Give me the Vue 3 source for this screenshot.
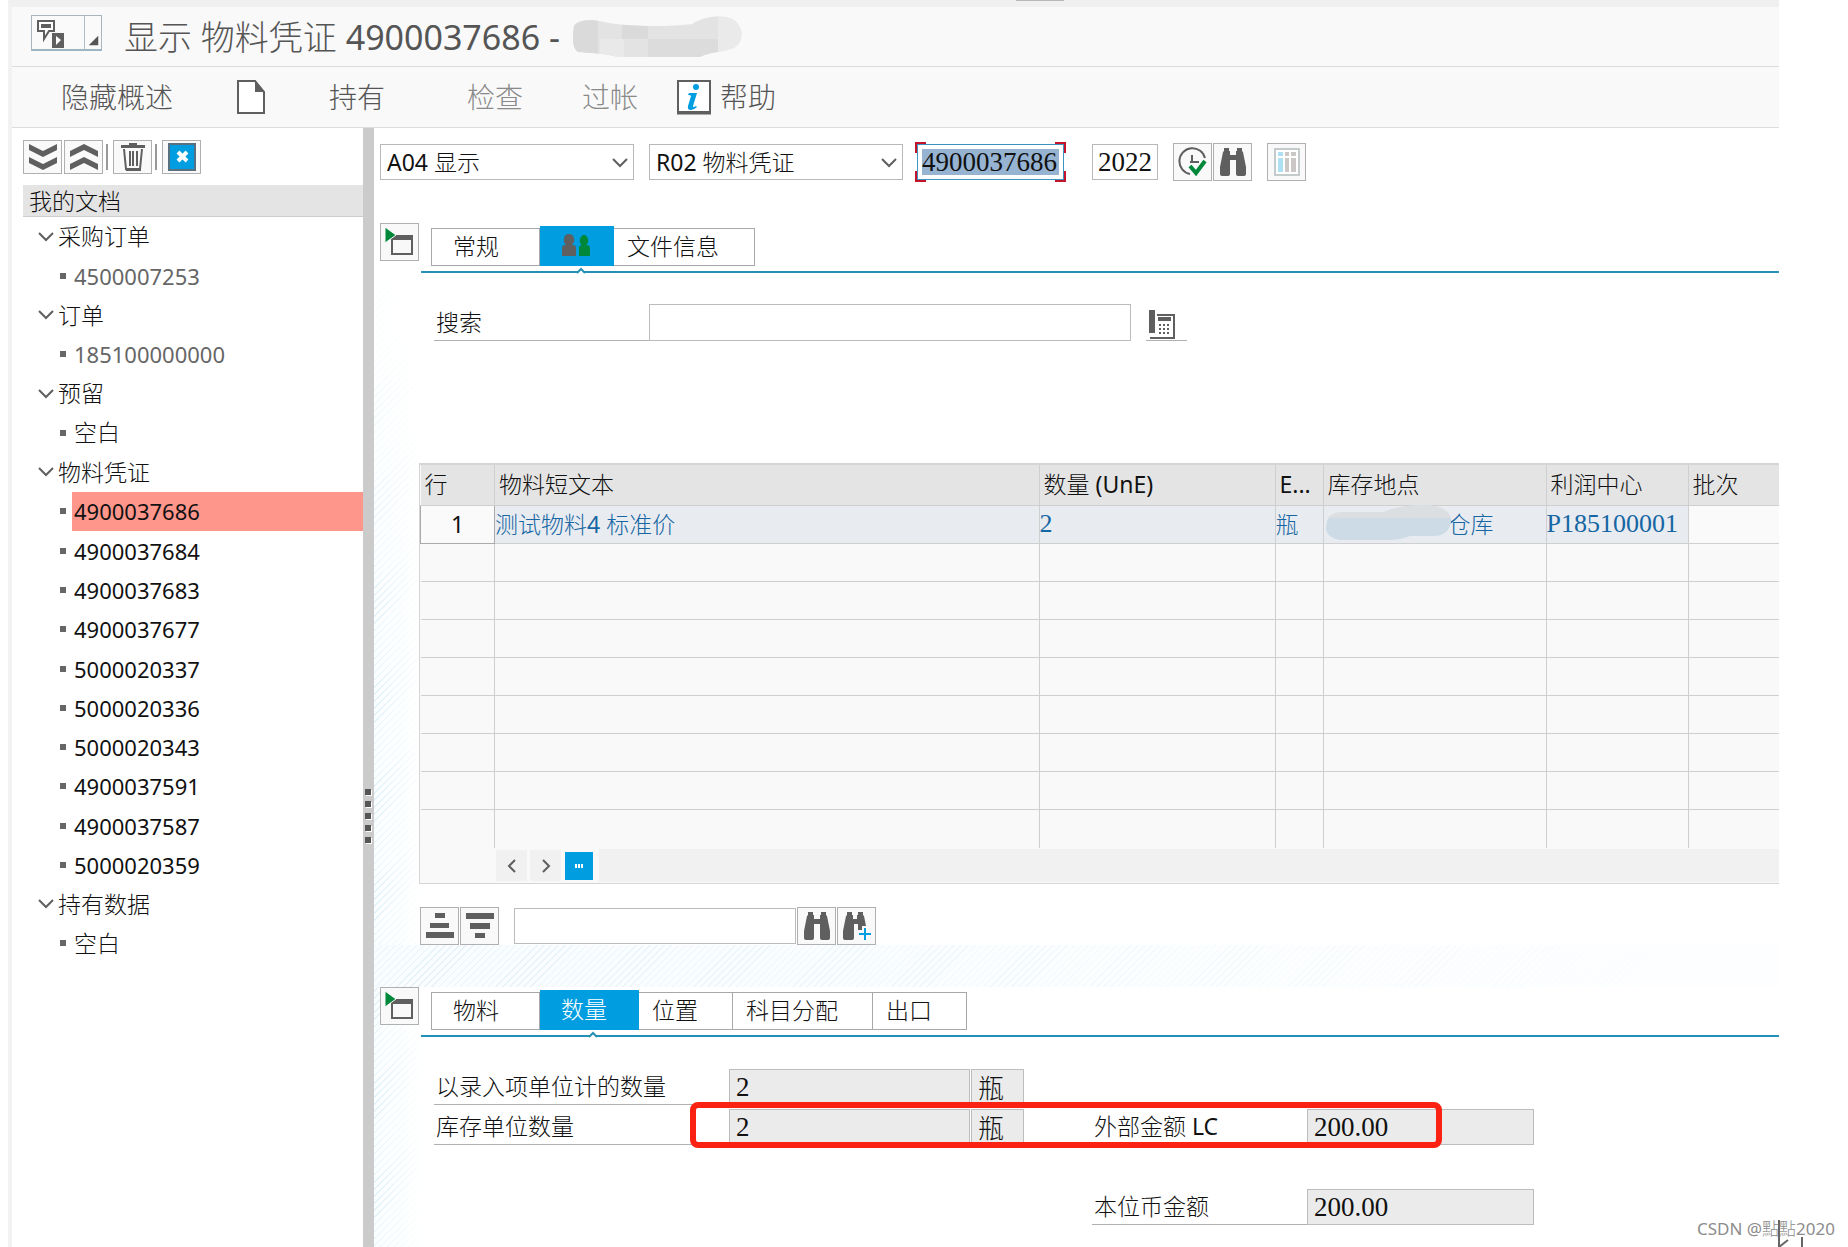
<script setup>
import { ref } from 'vue'

const action = ref('A04')
const refDoc = ref('R02')
const docNumber = ref('4900037686')
const docYear = ref('2022')
const keyword = ref('')
const itemSearch = ref('')

const tree = [
  { label: '采购订单', group: true },
  { label: '4500007253', muted: true, num: true },
  { label: '订单', group: true },
  { label: '185100000000', muted: true, num: true },
  { label: '预留', group: true },
  { label: '空白' },
  { label: '物料凭证', group: true },
  { label: '4900037686', active: true, num: true },
  { label: '4900037684', num: true },
  { label: '4900037683', num: true },
  { label: '4900037677', num: true },
  { label: '5000020337', num: true },
  { label: '5000020336', num: true },
  { label: '5000020343', num: true },
  { label: '4900037591', num: true },
  { label: '4900037587', num: true },
  { label: '5000020359', num: true },
  { label: '持有数据', group: true },
  { label: '空白' },
]

const columns = [
  { title: '行', cls: 'c-row' },
  { title: '物料短文本', cls: 'c-text' },
  { title: '数量 (UnE)', cls: 'c-qty' },
  { title: 'E...', cls: 'c-unit' },
  { title: '库存地点', cls: 'c-loc' },
  { title: '利润中心', cls: 'c-profit' },
  { title: '批次', cls: 'c-batch' },
]
</script>

<template>
  <div class="page">
    <div class="window">
      <i class="handle"></i>
      <header class="titlebar">
        <button class="menu-btn" aria-label="菜单">
          <svg width="52" height="34" viewBox="0 0 52 34">
            <path d="M6 5h16v10h-5l-5 8v-8H6z" fill="#fff" stroke="#5f5f5f" stroke-width="2" />
            <path d="M9 8h10v4H9z" fill="#5f5f5f" />
            <path d="M20 17h12v15H20z" fill="#5f5f5f" />
            <path d="M24 20l5 4-5 5z" fill="#fff" />
          </svg>
          <svg class="menu-corner" width="18" height="34" viewBox="0 0 18 34">
            <path d="M14 20v10H4z" fill="#555" />
          </svg>
        </button>
        <h1>显示 物料凭证 4900037686 -</h1>
        <svg class="title-mask" width="172" height="42" viewBox="0 0 172 42">
          <defs>
            <clipPath id="titleBlob">
              <path d="M4 10C7 4 22 3 34 6C55 11 100 11 122 8C135 0 152-2 164 4C176 14 172 27 164 32C152 36 140 36 130 41H48C34 37 20 37 8 36C1 31 3 18 4 10z" />
            </clipPath>
          </defs>
          <g clip-path="url(#titleBlob)">
            <path d="M0 0h172v42H0z" fill="#e3e3e3" />
            <path d="M0 0h28v42H0zM52 0h26v23H52z" fill="#dadada" />
            <path d="M78 23h70v19H78z" fill="#dcdcdc" />
            <path d="M148 0h24v42h-24z" fill="#eaeaea" />
            <path d="M30 23h24v19H30z" fill="#e9e9e9" />
          </g>
        </svg>
      </header>

      <nav class="toolbar">
        <button class="tool t-hide">隐藏概述</button>
        <button class="tool t-new" aria-label="新建">
          <svg width="30" height="36" viewBox="0 0 30 36">
            <path d="M2 2h17l9 11v21H2z" fill="#fff" stroke="#5f5f5f" stroke-width="2" />
            <path d="M19 1l10 12H19z" fill="#5f5f5f" />
            <path d="M1 34h28" stroke="#5f5f5f" stroke-width="2" />
          </svg>
        </button>
        <button class="tool t-hold">持有</button>
        <button class="tool t-check dim">检查</button>
        <button class="tool t-post dim">过帐</button>
        <button class="tool t-help">
          <svg width="34" height="36" viewBox="0 0 34 36">
            <path d="M1 2h32v31H1z" fill="#fff" stroke="#5f5f5f" stroke-width="2" />
            <path d="M0 34h34" stroke="#5f5f5f" stroke-width="3" />
            <circle cx="19" cy="8" r="3" fill="#009de0" />
            <path d="M12 14h8l-4 13q0 2 3 0l1 1q-3 3-6 3-4 0-3-4l3-10q0-1-3-1z" fill="#009de0" />
          </svg>
          帮助
        </button>
      </nav>

      <div class="body">
        <aside class="side">
          <div class="side-tools">
            <button class="icon-btn" aria-label="全部展开">
              <svg width="30" height="28" viewBox="0 0 30 28" fill="#5f5f5f">
                <path d="M1 1l14 7 14-7v6l-14 7L1 7zM1 14l14 7 14-7v6l-14 7L1 20z" />
              </svg>
            </button>
            <button class="icon-btn" aria-label="全部折叠">
              <svg width="30" height="28" viewBox="0 0 30 28" fill="#5f5f5f">
                <path d="M1 14V8l14-7 14 7v6L15 7zM1 27v-6l14-7 14 7v6l-14-7z" />
              </svg>
            </button>
            <i class="sep"></i>
            <button class="icon-btn" aria-label="删除">
              <svg width="26" height="30" viewBox="0 0 26 30">
                <path d="M9 3V1h8v2h8v3H1V3z" fill="#5f5f5f" />
                <path d="M4 7l2 20h14l2-20M10 9v15M13 9v15M17 9v15" fill="none" stroke="#5f5f5f" stroke-width="2" />
                <path d="M5 26h16v3H6z" fill="#5f5f5f" />
              </svg>
            </button>
            <i class="sep"></i>
            <button class="icon-btn" aria-label="关闭概述">
              <svg width="28" height="28" viewBox="0 0 28 28">
                <path d="M1 1h26v26H1z" fill="#009de0" stroke="#5a7080" stroke-width="2" />
                <path d="M10 9l9 9M19 9l-9 9" stroke="#fff" stroke-width="4" />
              </svg>
            </button>
          </div>
          <h2>我的文档</h2>
          <ul class="tree">
            <li v-for="(n, i) in tree" :key="i" :class="{ group: n.group, muted: n.muted, active: n.active, num: n.num }">
              <svg v-if="n.group" class="caret" width="16" height="10" viewBox="0 0 16 10">
                <path d="M1 1l7 7 7-7" fill="none" stroke="#5f5f5f" stroke-width="2" />
              </svg>
              <i v-else class="dot"></i>
              <span>{{ n.label }}</span>
            </li>
          </ul>
        </aside>

        <div class="splitter"><i v-for="n in 5" :key="n"></i></div>

        <main class="main">
          <div class="selectors">
            <div class="pick">
              <select v-model="action" aria-label="操作"><option value="A04">A04 显示</option></select>
              <svg width="16" height="10" viewBox="0 0 16 10"><path d="M1 1l7 7 7-7" fill="none" stroke="#5f5f5f" stroke-width="2" /></svg>
            </div>
            <div class="pick">
              <select v-model="refDoc" aria-label="参考凭证"><option value="R02">R02 物料凭证</option></select>
              <svg width="16" height="10" viewBox="0 0 16 10"><path d="M1 1l7 7 7-7" fill="none" stroke="#5f5f5f" stroke-width="2" /></svg>
            </div>
            <div class="focus-field">
              <input v-model="docNumber" aria-label="物料凭证编号" />
              <i class="k tl"></i><i class="k tr"></i><i class="k bl"></i><i class="k br"></i>
            </div>
            <input v-model="docYear" class="year" aria-label="年度" />
            <div class="pair">
              <button class="icon-btn tall" aria-label="执行">
                <svg width="30" height="30" viewBox="0 0 30 30" fill="none">
                  <path d="M12 27A13 13 0 1 1 27 11" stroke="#5f5f5f" stroke-width="2" />
                  <path d="M14 8v8M12 15h9" stroke="#5f5f5f" stroke-width="2" />
                  <path d="M12 19l6 7 9-12" stroke="#00883a" stroke-width="4" />
                </svg>
              </button>
              <button class="icon-btn tall" aria-label="查找凭证">
                <svg width="28" height="30" viewBox="0 0 28 30" fill="#5f5f5f">
                  <path d="M5 1h5v3h1v4h6V4h1V1h5v3l1 1 3 15v7q0 2-2 2h-6q-2 0-2-2V13h-6v14q0 2-2 2H3q-2 0-2-2v-7L4 5l1-1z" />
                </svg>
              </button>
            </div>
            <button class="icon-btn tall" aria-label="布局">
              <svg width="28" height="30" viewBox="0 0 28 30">
                <path d="M2 2h24v26H2z" fill="#fff" stroke="#c4cbcd" stroke-width="2" />
                <path d="M5 5h5v4H5zM5 11h5v14H5z" fill="#ade0f2" />
                <path d="M12 5h4v4h-4zM12 11h4v14h-4zM18 5h5v4h-5zM18 11h5v14h-5z" fill="#cbc7c7" />
              </svg>
            </button>
          </div>

          <div class="tab-row">
            <button class="icon-btn tall" aria-label="折叠抬头">
              <svg width="30" height="32" viewBox="0 0 30 32">
                <path d="M7 12h20v16H7z" fill="#f8f8f8" stroke="#5f5f5f" stroke-width="2" />
                <path d="M9 9h19v5H6z" fill="#5f5f5f" />
                <path d="M0 1l11 8-11 8z" fill="#00883a" stroke="#f8f8f8" stroke-width="1" />
              </svg>
            </button>
            <div class="tabs-box">
              <div class="tabs">
                <button class="tab w-a">常规</button>
                <button class="tab w-b on" aria-label="供应商">
                  <svg width="30" height="22" viewBox="0 0 30 22">
                    <path d="M1 22V14q0-3 3-3h1Q2 8 3 4q1-4 5-4t5 4q1 4-2 7h1q3 0 3 3v8z" fill="#5f5f5f" />
                    <path d="M18 22v-8q0-3 3-3Q18 9 19 5q1-4 4-4t4 4q1 4-2 6 4 0 4 3v8z" fill="#00883a" />
                  </svg>
                  <svg class="notch" width="10" height="7" viewBox="0 0 10 7">
                    <path d="M1 6l4-4 4 4" fill="#fff" stroke="#2590b5" stroke-width="2" />
                  </svg>
                </button>
                <button class="tab w-c near">文件信息</button>
              </div>
            </div>
          </div>

          <div class="search-row">
            <label for="kw">搜索</label>
            <input id="kw" v-model="keyword" />
            <button class="phone" aria-label="联系方式">
              <svg width="28" height="30" viewBox="0 0 28 30">
                <path d="M1 1h6v23H1z" fill="#5f5f5f" />
                <path d="M9 6h17v23H2" fill="none" stroke="#5f5f5f" stroke-width="2" />
                <path d="M10 8h13v4H10z" fill="#5f5f5f" />
                <path d="M11 16h11M11 20h11M11 24h11" stroke="#5f5f5f" stroke-width="2" stroke-dasharray="2 2" />
              </svg>
            </button>
          </div>

          <section class="grid-box">
            <table>
              <colgroup><col v-for="c in columns" :key="c.cls" :class="c.cls" /></colgroup>
              <thead>
                <tr><th v-for="c in columns" :key="c.cls">{{ c.title }}</th></tr>
              </thead>
              <tbody>
                <tr class="filled">
                  <td class="rownum">1</td>
                  <td>测试物料4 标准价</td>
                  <td class="serif">2</td>
                  <td>瓶</td>
                  <td class="loc">
                    <svg width="128" height="36" viewBox="0 0 128 36">
                      <path d="M3 17Q6 8 20 8L60 8Q80 0 104 1 128 4 127 18 124 33 108 32L86 32Q76 36 66 36L16 36Q2 33 2 24z" fill="#cddbe7" />
                      <path d="M4 14Q8 8 20 8L60 8Q80 0 104 1 123 3 127 14z" fill="#dcdfe2" />
                    </svg>
                    <span>仓库</span>
                  </td>
                  <td class="serif">P185100001</td>
                  <td class="blank"></td>
                </tr>
                <tr v-for="r in 8" :key="r"><td v-for="c in columns" :key="c.cls"></td></tr>
              </tbody>
            </table>
            <div class="scroller">
              <button class="arrow" aria-label="向左滚动">
                <svg width="10" height="14" viewBox="0 0 10 14"><path d="M8 1L2 7l6 6" fill="none" stroke="#5f5f5f" stroke-width="2" /></svg>
              </button>
              <button class="arrow" aria-label="向右滚动">
                <svg width="10" height="14" viewBox="0 0 10 14"><path d="M2 1l6 6-6 6" fill="none" stroke="#5f5f5f" stroke-width="2" /></svg>
              </button>
              <button class="thumb" aria-label="滚动块">
                <svg width="8" height="4" viewBox="0 0 8 4"><path d="M0 0h2v4H0zM3 0h2v4H3zM6 0h2v4H6z" fill="#fff" /></svg>
              </button>
              <div class="track"></div>
            </div>
          </section>

          <div class="item-tools">
            <div class="pair">
              <button class="icon-btn tall" aria-label="升序">
                <svg width="30" height="26" viewBox="0 0 30 26" fill="#5f5f5f"><path d="M10 0h10v5H10zM5 10h19v5H5zM1 19h28v6H1z" /></svg>
              </button>
              <button class="icon-btn tall" aria-label="降序">
                <svg width="30" height="26" viewBox="0 0 30 26" fill="#5f5f5f"><path d="M1 0h28v6H1zM5 10h20v6H5zM10 20h10v5H10z" /></svg>
              </button>
            </div>
            <input v-model="itemSearch" aria-label="查找项目" />
            <div class="pair">
              <button class="icon-btn tall" aria-label="查找">
                <svg width="28" height="30" viewBox="0 0 28 30" fill="#5f5f5f">
                  <path d="M5 1h5v3h1v4h6V4h1V1h5v3l1 1 3 15v7q0 2-2 2h-6q-2 0-2-2V13h-6v14q0 2-2 2H3q-2 0-2-2v-7L4 5l1-1z" />
                </svg>
              </button>
              <button class="icon-btn tall" aria-label="查找下一个">
                <svg width="30" height="30" viewBox="0 0 30 30" fill="#5f5f5f">
                  <path d="M5 1h5v3h1v4h4V4h1V1h5v3l1 1 2 10h-4v4h-4v-6h-4v14q0 2-2 2H3q-2 0-2-2v-7L4 5l1-1z" />
                  <path d="M23 17v12M17 23h12" stroke="#009de0" stroke-width="2" />
                </svg>
              </button>
            </div>
          </div>

          <div class="band"></div>

          <div class="tab-row second">
            <button class="icon-btn tall" aria-label="折叠明细">
              <svg width="30" height="32" viewBox="0 0 30 32">
                <path d="M7 12h20v16H7z" fill="#f8f8f8" stroke="#5f5f5f" stroke-width="2" />
                <path d="M9 9h19v5H6z" fill="#5f5f5f" />
                <path d="M0 1l11 8-11 8z" fill="#00883a" stroke="#f8f8f8" stroke-width="1" />
              </svg>
            </button>
            <div class="tabs-box">
              <div class="tabs">
                <button class="tab w-a">物料</button>
                <button class="tab w-d on">
                  数量
                  <svg class="notch" width="10" height="7" viewBox="0 0 10 7">
                    <path d="M1 6l4-4 4 4" fill="#fff" stroke="#2590b5" stroke-width="2" />
                  </svg>
                </button>
                <button class="tab w-e near">位置</button>
                <button class="tab w-f near">科目分配</button>
                <button class="tab w-e near">出口</button>
              </div>
            </div>
          </div>

          <form class="detail" @submit.prevent>
            <div class="line">
              <label for="q1" class="lab">以录入项单位计的数量</label>
              <input id="q1" class="qty" value="2" readonly />
              <input class="unit" value="瓶" readonly aria-label="录入单位" />
            </div>
            <div class="line">
              <label for="q2" class="lab">库存单位数量</label>
              <input id="q2" class="qty" value="2" readonly />
              <input class="unit" value="瓶" readonly aria-label="库存单位" />
              <label for="a1" class="lab money">外部金额 LC</label>
              <input id="a1" class="amount" value="200.00" readonly />
              <div class="mark"></div>
            </div>
            <div class="line last">
              <label for="a2" class="lab money">本位币金额</label>
              <input id="a2" class="amount" value="200.00" readonly />
            </div>
          </form>
        </main>
      </div>
    </div>
    <svg class="cursor" width="28" height="27" viewBox="0 0 28 27">
      <path d="M1 0v27M1 27l9-7M24 17v10" fill="none" stroke="#666" stroke-width="2" />
    </svg>
    <div class="credit">CSDN @點點2020</div>
  </div>
</template>

<style>
body {
  margin: 0;
  background: #fff;
}
</style>

<style scoped>
.page {
  position: relative;
  min-height: 100vh;
  display: flex;
  box-sizing: border-box;
  padding-right: 69px;
  overflow: hidden;
  color: #111;
  font: 400 23px/1 "Noto Sans", "Noto Sans CJK SC Light", "Noto Sans CJK SC", sans-serif;
}
.page *,
.page *::before {
  box-sizing: border-box;
}
button,
input,
select {
  margin: 0;
  padding: 0;
  border: 0;
  border-radius: 0;
  background: none;
  color: inherit;
  font: inherit;
}
svg {
  display: block;
  flex: none;
}
.window {
  flex: 1;
  min-width: 0;
  display: flex;
  flex-direction: column;
  margin-left: 8px;
  border-top: 7px solid #f0f0f0;
  border-left: 4px solid #f2f2f2;
}
.handle {
  position: absolute;
  left: 55%;
  top: 0;
  width: 48px;
  height: 1px;
  background: #b8b8b8;
}
.titlebar {
  display: flex;
  align-items: center;
  height: 60px;
  padding-left: 19px;
  background: #f9f9f9;
  border-bottom: 1px solid #dcdcdc;
}
.menu-btn {
  display: flex;
  width: 71px;
  height: 36px;
  margin-bottom: 8px;
  border: 1px solid #a9b4bb;
  border-bottom: 2px solid #9db4c4;
  background: #fafafa;
}
.menu-corner {
  border-left: 1px solid #b5bcc2;
}
h1 {
  margin: 0 10px 0 22px;
  color: #555;
  font-size: 34px;
  line-height: 50px;
  font-weight: 400;
}
.toolbar {
  display: flex;
  align-items: center;
  height: 61px;
  padding-left: 49px;
  background: #f9f9f9;
  border-bottom: 1px solid #dcdcdc;
  color: #555;
}
.tool {
  display: flex;
  align-items: center;
  gap: 9px;
  font-size: 28px;
  white-space: nowrap;
}
.t-new {
  margin-left: 63px;
}
.t-hold {
  margin-left: 63px;
}
.t-check {
  margin-left: 82px;
}
.t-post {
  margin-left: 59px;
}
.t-help {
  margin-left: 39px;
}
.dim {
  color: #8a8a8a;
}
.body {
  flex: 1;
  display: flex;
  background: #fff;
}
.side {
  width: 351px;
  padding: 12px 0 0 11px;
}
.side-tools {
  display: flex;
  align-items: center;
  gap: 2px;
  height: 34px;
}
.icon-btn {
  display: flex;
  align-items: center;
  justify-content: center;
  width: 39px;
  height: 34px;
  flex: none;
  border: 1px solid #b0b0b0;
  background: #f9f9f9;
}
.icon-btn.tall {
  height: 38px;
}
.sep {
  width: 2px;
  height: 26px;
  margin: 0 3px 0 1px;
  background: #999;
}
.side h2 {
  margin: 11px 0 0;
  padding-left: 6px;
  height: 32px;
  background: #e4e4e4;
  border-bottom: 1px solid #ccc;
  font-size: 23px;
  line-height: 32px;
  font-weight: 400;
}
.tree {
  display: grid;
  grid-auto-rows: 1fr;
  min-height: 746px;
  margin: 0;
  padding: 0;
  list-style: none;
}
.tree li {
  display: flex;
  align-items: center;
  padding-left: 37px;
}
.tree li.num {
  font-size: 22px;
}
.tree li.group {
  padding-left: 15px;
}
.caret {
  margin-right: 4px;
}
.dot {
  width: 6px;
  height: 6px;
  margin-right: 6px;
  background: #666;
}
.tree li span {
  flex: 1;
  align-self: stretch;
  display: flex;
  align-items: center;
  padding-left: 2px;
}
.tree li.group span {
  padding-left: 0;
}
.muted {
  color: #666;
}
.active span {
  background: #ff968c;
}
.splitter {
  width: 11px;
  display: flex;
  flex-direction: column;
  align-items: flex-start;
  gap: 6px;
  padding: 661px 0 0 2px;
  background: #cbcbcb;
}
.splitter i {
  width: 6px;
  height: 6px;
  background: #555;
  box-shadow: 1px 1px 0 #fff;
}
.main {
  flex: 1;
  min-width: 0;
  background:
    linear-gradient(to bottom, #fff 120px, transparent 500px),
    linear-gradient(to right, transparent, #fff 50px),
    repeating-linear-gradient(135deg, #e2f1f8 0 1px, #fbfeff 1px 5px);
}
.selectors {
  display: flex;
  align-items: center;
  height: 40px;
  margin-top: 14px;
  padding-left: 6px;
}
.pick {
  position: relative;
  width: 254px;
  height: 36px;
  margin-right: 15px;
}
.pick select {
  appearance: none;
  width: 100%;
  height: 36px;
  padding-left: 6px;
  border: 1px solid #b8b8b8;
  background: #fff;
}
.pick svg {
  position: absolute;
  right: 6px;
  top: 14px;
  pointer-events: none;
}
.focus-field {
  position: relative;
  width: 151px;
  height: 40px;
  padding: 2px;
  margin-right: 26px;
  margin-left: -3px;
}
.focus-field input {
  width: 100%;
  height: 36px;
  padding: 4px;
  border: 1px solid #3b93c0;
  background: #97b3d2 content-box;
  font: 27px/28px "Liberation Serif", serif;
}
.k {
  position: absolute;
  width: 11px;
  height: 11px;
  border: 0 solid #c4142c;
}
.tl { left: 0; top: 0; border-width: 2px 0 0 2px; }
.tr { right: 0; top: 0; border-width: 2px 2px 0 0; }
.bl { left: 0; bottom: 0; border-width: 0 0 2px 2px; }
.br { right: 0; bottom: 0; border-width: 0 2px 2px 0; }
.year {
  width: 66px;
  height: 36px;
  padding-left: 5px;
  margin-right: 15px;
  border: 1px solid #b8b8b8;
  background: #fff;
  font: 27px/34px "Liberation Serif", serif;
}
.pair {
  display: flex;
  gap: 1px;
}
.selectors .pair {
  margin-right: 15px;
}
.tab-row {
  display: flex;
  gap: 2px;
  margin-top: 41px;
  padding-left: 6px;
}
.tab-row .icon-btn {
  justify-content: flex-start;
  padding-left: 4px;
}
.tabs-box {
  flex: 1;
  height: 50px;
  padding-top: 3px;
  border-bottom: 2px solid #2590b5;
}
.tabs {
  display: flex;
  align-items: flex-end;
  height: 40px;
  padding-left: 10px;
}
.tab {
  position: relative;
  height: 38px;
  padding: 0 0 2px 21px;
  border: 1px solid #a8a8a8;
  border-left: 0;
  background: #fff;
  text-align: left;
}
.tab:first-child {
  border-left: 1px solid #a8a8a8;
}
.tab.near {
  padding-left: 13px;
}
.tab.on {
  height: 40px;
  border: 0;
  background: #009de0;
  color: #fff;
}
.w-a { width: 109px; }
.w-b { width: 74px; }
.w-c { width: 141px; }
.w-d { width: 99px; }
.w-e { width: 94px; }
.w-f { width: 140px; }
.notch {
  position: absolute;
  left: 48%;
  bottom: -8px;
}
.search-row {
  display: flex;
  height: 37px;
  margin: 31px 0 0 60px;
}
.search-row label {
  width: 215px;
  padding-left: 2px;
  border-bottom: 1px solid #b0b0b0;
  line-height: 36px;
}
.search-row input {
  width: 482px;
  border: 1px solid #bcbcbc;
  background: #fff;
}
.phone {
  width: 41px;
  height: 37px;
  margin-left: 15px;
  padding: 4px 0 0 2px;
  border-bottom: 1px solid #b0b0b0;
}
.grid-box {
  margin: 122px 0 0 45px;
  border: 1px solid #d5d5d5;
  border-width: 2px 0 1px 1px;
  background: #f9f9f9;
}
table {
  width: 100%;
  height: 383px;
  table-layout: fixed;
  border-collapse: collapse;
}
.c-row { width: 74px; }
.c-qty { width: 236px; }
.c-unit { width: 48px; }
.c-loc { width: 223px; }
.c-profit { width: 142px; }
.c-batch { width: 91px; }
th,
td {
  height: 38px;
  padding: 0;
  border-left: 1px solid #cfcfcf;
  border-bottom: 1px solid #cfcfcf;
  text-align: left;
  font-weight: 400;
  white-space: nowrap;
}
th {
  height: 40px;
  padding-left: 4px;
  background: #e4e4e4;
}
th:first-child,
td:first-child {
  border-left: 0;
}
tbody tr:last-child td {
  border-bottom: 0;
}
.filled td {
  background: #e8ecf0;
  color: #1666a4;
}
.filled .serif {
  font: 26px/1 "Liberation Serif", serif;
}
.filled .rownum {
  border: 1px solid #aaa;
  background: #fafafa;
  color: #111;
  text-align: center;
}
.filled .blank {
  background: #fafafa;
}
.loc {
  position: relative;
}
.loc svg {
  position: absolute;
  left: 0;
  top: -2px;
}
.loc span {
  padding-left: 124px;
}
.scroller {
  display: flex;
  align-items: center;
  gap: 3px;
  height: 35px;
  padding-left: 76px;
}
.arrow {
  display: flex;
  align-items: center;
  justify-content: center;
  width: 31px;
  height: 31px;
  background: #f1f1f1;
}
.thumb {
  display: flex;
  align-items: center;
  justify-content: center;
  width: 28px;
  height: 28px;
  margin: 0 3px 0 1px;
  background: #009de0;
}
.track {
  flex: 1;
  height: 33px;
  background: #f1f1f1;
}
.item-tools {
  display: flex;
  align-items: center;
  height: 38px;
  margin: 23px 0 0 46px;
}
.item-tools input {
  width: 282px;
  height: 36px;
  margin: 0 1px 0 15px;
  border: 1px solid #bcbcbc;
  background: #fff;
}
.band {
  height: 42px;
  background:
    linear-gradient(to right, transparent, #fdfeff 100%),
    repeating-linear-gradient(135deg, #e6f2f8 0 1px, #f9fdff 1px 5px);
}
.second {
  margin-top: 0;
}
.detail {
  display: flex;
  flex-direction: column;
  gap: 4px;
  padding: 32px 0 21px 60px;
}
.line {
  position: relative;
  display: flex;
  height: 36px;
}
.lab {
  width: 295px;
  padding-left: 2px;
  border-bottom: 1px solid #b0b0b0;
  line-height: 35px;
}
.lab.money {
  width: 215px;
  margin-left: 68px;
}
.last {
  margin-top: 40px;
}
.last .lab.money {
  margin-left: 658px;
}
.qty,
.unit,
.amount {
  padding-left: 6px;
  border: 1px solid #bdbdbd;
  background: #ebebeb;
  font: 27px/34px "Liberation Serif", serif;
}
.qty {
  width: 241px;
}
.unit {
  width: 53px;
  margin-left: 1px;
  font: 400 26px/34px "Noto Sans CJK SC Light", "Noto Sans CJK SC", sans-serif;
}
.amount {
  width: 227px;
}
.mark {
  position: absolute;
  left: 256px;
  top: -7px;
  width: 752px;
  height: 46px;
  border: 6px solid #fb2113;
  border-radius: 8px;
  pointer-events: none;
}
.cursor {
  position: absolute;
  right: 42px;
  bottom: 0;
}
.credit {
  position: absolute;
  right: 13px;
  bottom: 8px;
  color: #8c8c8c;
  font-size: 17px;
  line-height: 20px;
}
</style>
